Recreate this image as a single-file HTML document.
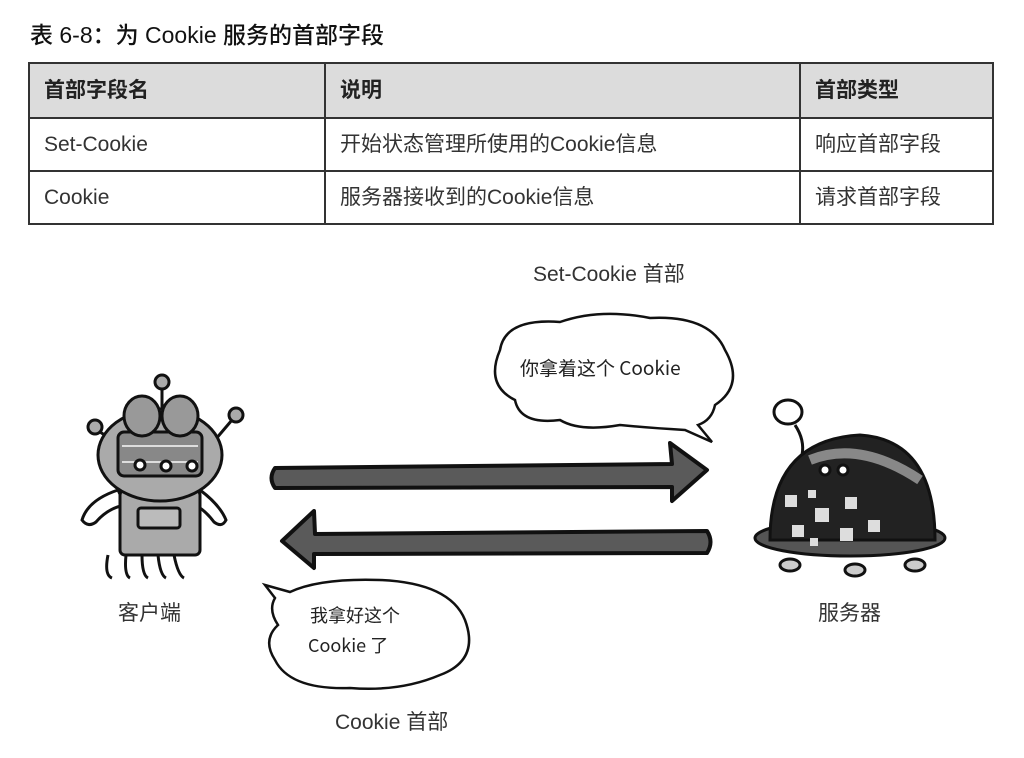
<!DOCTYPE html>
<html><head><meta charset="utf-8"><style>
body{margin:0;width:1024px;height:758px;background:#fff;position:relative;overflow:hidden;font-family:"Liberation Sans","Noto Sans CJK SC",sans-serif;color:#333}
.t{position:absolute;left:30px;top:16px;font-size:23px;color:#111;font-weight:500}
table{position:absolute;left:28px;top:62px;width:966px;border-collapse:collapse;font-size:21px;color:#333}
td{border:2px solid #333;padding:0 0 0 14px;height:51px;vertical-align:middle;line-height:51px}
tr.h td{background:#dcdcdc;font-weight:bold;color:#222;height:53px}
.l{position:absolute;font-size:21px;color:#333}
</style></head><body>
<div class="t">表 6-8：为 Cookie 服务的首部字段</div>
<table>
<tr class="h"><td style="width:280px">首部字段名</td><td style="width:459px">说明</td><td>首部类型</td></tr>
<tr><td>Set-Cookie</td><td>开始状态管理所使用的Cookie信息</td><td>响应首部字段</td></tr>
<tr><td>Cookie</td><td>服务器接收到的Cookie信息</td><td>请求首部字段</td></tr>
</table>
<div class="l" style="left:533px;top:258px">Set-Cookie 首部</div>
<div class="l" style="left:335px;top:706px">Cookie 首部</div>
<div class="l" style="left:118px;top:597px">客户端</div>
<div class="l" style="left:818px;top:597px">服务器</div>
<svg width="1024" height="758" style="position:absolute;left:0;top:0" xmlns="http://www.w3.org/2000/svg">
<g stroke="#111" stroke-width="4" stroke-linejoin="round" fill="#5a5a5a">
<path d="M275 468 L672 464 L670 443 L707 470 L672 501 L672 487 L275 488 Q268 478 275 468Z"/>
<path d="M707 531 L315 534 L314 511 L282 541 L314 568 L314 554 L707 553 Q714 542 707 531Z"/>
</g>
<g stroke="#111" stroke-width="2.5" fill="#fff">
<path d="M500 350 Q505 318 560 322 Q600 308 650 318 Q710 315 725 350 Q745 385 715 405 Q712 420 698 425 L712 442 L685 430 Q650 428 620 425 Q580 432 560 420 Q520 425 515 400 Q485 385 500 350Z"/>
<path d="M275 598 L265 585 L290 592 Q320 578 380 580 Q450 583 465 620 Q480 660 440 675 Q400 692 350 688 Q290 690 275 660 Q262 640 278 625 Q268 610 275 598Z"/>
</g>
<g font-family="Noto Sans CJK SC,sans-serif" font-size="19" fill="#222">
<text x="520" y="375">你拿着这个 Cookie</text>
<text x="310" y="622" font-size="18">我拿好这个</text>
<text x="308" y="652" font-size="18">Cookie 了</text>
</g>
<!-- client robot -->
<g stroke="#111" stroke-width="3" fill="#aaa">
<line x1="162" y1="390" x2="162" y2="420"/><circle cx="162" cy="382" r="7"/>
<line x1="100" y1="432" x2="120" y2="445"/><circle cx="95" cy="427" r="7"/>
<line x1="232" y1="420" x2="215" y2="440"/><circle cx="236" cy="415" r="7"/>
<path d="M108 555 Q104 575 112 578 M126 555 Q124 575 130 578 M142 555 Q142 575 148 578 M158 555 Q160 575 166 578 M174 555 Q178 575 184 578" fill="none"/>
<path d="M118 490 Q88 500 82 520 Q88 528 96 522 Q108 508 125 505Z" fill="#fff"/>
<path d="M200 490 Q220 505 226 520 Q222 528 214 522 Q205 510 195 505Z" fill="#fff"/>
<rect x="120" y="490" width="80" height="65" rx="5"/>
<rect x="138" y="508" width="42" height="20" rx="3" fill="#bbb"/>
<ellipse cx="160" cy="455" rx="62" ry="46"/>
<rect x="118" y="432" width="84" height="44" rx="6" fill="#888"/>
<path d="M122 446 H198 M122 462 H198" stroke="#ddd" stroke-width="2"/>
<circle cx="140" cy="465" r="5" fill="#fff"/><circle cx="166" cy="466" r="5" fill="#fff"/><circle cx="192" cy="466" r="5" fill="#fff"/>
<ellipse cx="142" cy="416" rx="18" ry="20" fill="#999"/><ellipse cx="180" cy="416" rx="18" ry="20" fill="#999"/>
</g>
<!-- server robot -->
<g stroke="#111" stroke-width="3">
<path d="M795 425 Q805 440 802 455" fill="none"/>
<ellipse cx="788" cy="412" rx="14" ry="12" fill="#fff"/>
<ellipse cx="850" cy="538" rx="95" ry="18" fill="#555"/>
<path d="M770 540 Q770 440 860 435 Q935 440 935 540Z" fill="#222"/>
<path d="M810 460 Q860 440 920 480" stroke="#888" stroke-width="10" fill="none"/>
<circle cx="825" cy="470" r="5" fill="#fff"/><circle cx="843" cy="470" r="5" fill="#fff"/>
<ellipse cx="790" cy="565" rx="10" ry="6" fill="#ccc"/><ellipse cx="855" cy="570" rx="10" ry="6" fill="#ccc"/><ellipse cx="915" cy="565" rx="10" ry="6" fill="#ccc"/>
</g>
<g fill="#ddd">
<rect x="785" y="495" width="12" height="12"/><rect x="808" y="490" width="8" height="8"/><rect x="815" y="508" width="14" height="14"/><rect x="845" y="497" width="12" height="12"/><rect x="792" y="525" width="12" height="12"/><rect x="810" y="538" width="8" height="8"/><rect x="840" y="528" width="13" height="13"/><rect x="868" y="520" width="12" height="12"/>
</g>
</svg>
</body></html>
